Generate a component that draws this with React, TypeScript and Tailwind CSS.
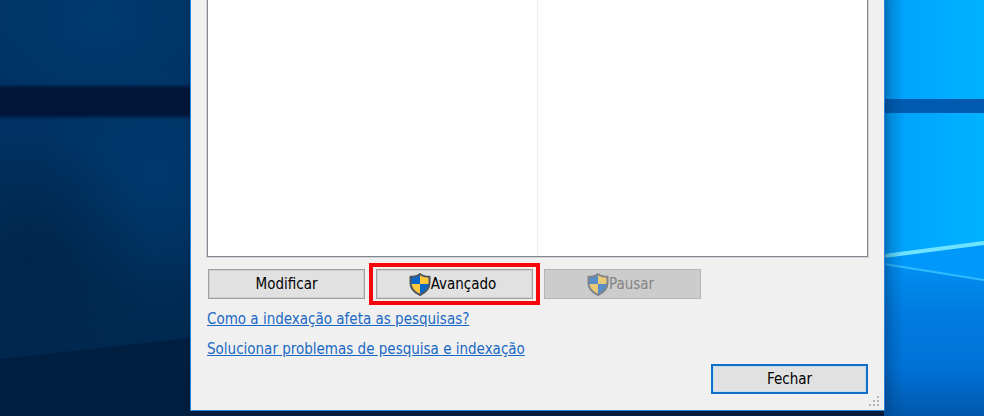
import { useId } from "react";
import type { ReactNode } from "react";
import clsx from "clsx";

const HELP_LINKS = [
  "Como a indexação afeta as pesquisas?",
  "Solucionar problemas de pesquisa e indexação",
];

function Wallpaper() {
  return (
    <svg className="absolute inset-0 h-full w-full" viewBox="0 0 984 416" preserveAspectRatio="none" aria-hidden="true">
      <defs>
        <linearGradient id="night" x1="0" y1="0" x2="0" y2="1">
          <stop offset="0" stopColor="#003566" />
          <stop offset="0.35" stopColor="#003263" />
          <stop offset="0.7" stopColor="#002b54" />
          <stop offset="1" stopColor="#00264c" />
        </linearGradient>
        <radialGradient id="glow">
          <stop offset="0" stopColor="#003b70" stopOpacity="0.8" />
          <stop offset="1" stopColor="#003b70" stopOpacity="0" />
        </radialGradient>
        <radialGradient id="dusk">
          <stop offset="0" stopColor="#002449" stopOpacity="0.8" />
          <stop offset="1" stopColor="#002449" stopOpacity="0" />
        </radialGradient>
        <linearGradient id="day" x1="0" y1="0" x2="1" y2="0">
          <stop offset="0" stopColor="#00a0fa" />
          <stop offset="0.4" stopColor="#00a8ff" />
          <stop offset="1" stopColor="#00b2ff" />
        </linearGradient>
        <linearGradient id="floor" x1="0" y1="0" x2="0" y2="1">
          <stop offset="0" stopColor="#0092f6" />
          <stop offset="0.35" stopColor="#007ce0" />
          <stop offset="0.7" stopColor="#0072d8" />
          <stop offset="1" stopColor="#0058ac" />
        </linearGradient>
        <linearGradient id="edge" x1="0" y1="0" x2="1" y2="0">
          <stop offset="0" stopColor="#003a70" stopOpacity="0.35" />
          <stop offset="1" stopColor="#003a70" stopOpacity="0" />
        </linearGradient>
        <filter id="soft" x="-5%" y="-20%" width="110%" height="140%">
          <feGaussianBlur stdDeviation="1.5" />
        </filter>
      </defs>

      <rect width="984" height="416" fill="url(#night)" />
      <ellipse cx="100" cy="20" rx="120" ry="90" fill="url(#glow)" />
      <ellipse cx="155" cy="175" rx="120" ry="120" fill="url(#glow)" />
      <ellipse cx="30" cy="260" rx="120" ry="130" fill="url(#dusk)" />
      <rect x="-10" y="86" width="220" height="31" fill="#001937" filter="url(#soft)" />
      <path d="M0 359 L190 338 L884 400 L884 416 L0 416 Z" fill="#001d3d" opacity="0.85" />

      <rect x="884" width="100" height="416" fill="url(#day)" />
      <path d="M884 256 L984 278 L984 416 L884 416 Z" fill="url(#floor)" />
      <path d="M884 258 L984 243 L984 280 L884 264 Z" fill="#0098fa" />
      <rect x="884" y="99" width="100" height="14" fill="#005bb0" />
      <path d="M884 256 L984 243" stroke="#6fe4ff" strokeWidth="4" />
      <path d="M884 264 L984 280" stroke="#2fbcff" strokeWidth="2" />
      <rect x="884" width="20" height="416" fill="url(#edge)" />
    </svg>
  );
}

function ShieldIcon({ faded }: { faded?: boolean }) {
  const clip = useId();
  const shield = "M11 1 C8.5 3 5 3.8 1.5 3.8 V10 C1.5 15.5 5 19.3 11 22 C17 19.3 20.5 15.5 20.5 10 V3.8 C17 3.8 13.5 3 11 1 Z";
  return (
    <svg width="22" height="23" viewBox="0 0 22 23" className={clsx("shrink-0", faded && "opacity-60")} aria-hidden="true">
      <clipPath id={clip}>
        <path d={shield} />
      </clipPath>
      <g clipPath={`url(#${clip})`}>
        <rect width="11" height="11" fill="#0b66c8" />
        <rect x="11" width="11" height="11" fill="#ffc83a" />
        <rect y="11" width="11" height="12" fill="#ffc83a" />
        <rect x="11" y="11" width="11" height="12" fill="#0b66c8" />
      </g>
      <path d={shield} fill="none" stroke="#4c5560" strokeWidth="2" strokeLinejoin="round" />
    </svg>
  );
}

interface DialogButtonProps {
  children: ReactNode;
  shield?: boolean;
  primary?: boolean;
  disabled?: boolean;
}

function DialogButton({ children, shield, primary, disabled }: DialogButtonProps) {
  return (
    <button
      type="button"
      disabled={disabled}
      className={clsx(
        "flex h-[30px] w-[157px] items-center justify-center",
        primary ? "border-2 border-[#0f6fca] inset-shadow-[0_0_0_1px_#c3dcf2]" : "border",
        disabled ? "border-[#b4b4b4] bg-[#cccccc] text-[#838383]" : "bg-[#e1e1e1] text-black",
        !primary && !disabled && "border-[#a0a0a0] inset-shadow-[0_0_0_1px_#cfcfcf]",
        shield && "pr-1"
      )}
    >
      {shield && <ShieldIcon faded={disabled} />}
      {children}
    </button>
  );
}

function SizeGrip() {
  return (
    <svg width="12" height="12" viewBox="0 0 12 12" className="absolute right-1 bottom-0.5" fill="#b4b4b4" aria-hidden="true">
      <rect x="9" y="0" width="2" height="2" />
      <rect x="5" y="4" width="2" height="2" />
      <rect x="9" y="4" width="2" height="2" />
      <rect x="1" y="8" width="2" height="2" />
      <rect x="5" y="8" width="2" height="2" />
      <rect x="9" y="8" width="2" height="2" />
    </svg>
  );
}

export default function App() {
  return (
    <div className="relative flex h-screen flex-col overflow-hidden pr-[99px] pb-[5px] pl-[190px] font-['DejaVu_Sans_Condensed','Noto_Sans',sans-serif] text-[15px] leading-5">
      <Wallpaper />
      <main className="relative flex flex-1 flex-col border border-t-0 border-[#2a84d6] bg-[#f0f0f0] px-4 pb-4 shadow-[0_0_6px_rgba(0,20,50,0.3)]">
        <div className="grid flex-1 grid-cols-2 border border-t-0 border-[#82878f] bg-white shadow-[0_0_0_1px_#d2d4d7]">
          <div className="border-r border-[#e8f0f5]" />
          <div />
        </div>

        <div className="mt-3 flex gap-[11px] pl-px">
          <DialogButton>Modificar</DialogButton>
          <div className="relative">
            <DialogButton shield>Avançado</DialogButton>
            <div className="pointer-events-none absolute -inset-x-[7px] -inset-y-1.5 border-4 border-[#f8060a]" />
          </div>
          <DialogButton shield disabled>Pausar</DialogButton>
        </div>

        <div className="mt-2.5 flex flex-col items-start gap-2.5">
          {HELP_LINKS.map((label) => (
            <a key={label} href="#" className="text-[#1a68c4] underline">
              {label}
            </a>
          ))}
        </div>

        <div className="mt-[5px] flex justify-end">
          <DialogButton primary>Fechar</DialogButton>
        </div>
        <SizeGrip />
      </main>
    </div>
  );
}
